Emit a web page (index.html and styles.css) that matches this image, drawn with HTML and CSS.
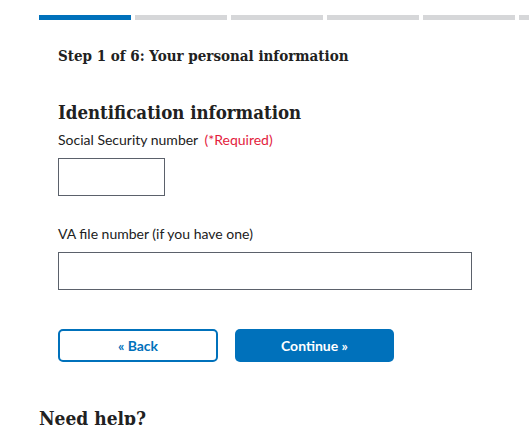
FILE: index.html
```html
<!DOCTYPE html>
<html lang="en">
<head>
<meta charset="utf-8">
<title>Step 1 of 6: Your personal information</title>
<link rel="stylesheet" href="styles.css">
</head>
<body>
<div class="page">
  <div class="progress">
    <span class="seg seg-active"></span>
    <span class="seg"></span>
    <span class="seg"></span>
    <span class="seg"></span>
    <span class="seg"></span>
    <span class="seg"></span>
  </div>
  <div class="form-area">
    <h2 class="step-title">Step 1 of 6: Your personal information</h2>
    <h3 class="section-title">Identification information</h3>
    <div class="field">
      <label class="label" for="ssn">Social Security number <span class="required">(*Required)</span></label>
      <input class="input input-ssn" id="ssn" type="text">
    </div>
    <div class="field field-va">
      <label class="label" for="va">VA file number (if you have one)</label>
      <input class="input input-va" id="va" type="text">
    </div>
    <div class="actions">
      <button class="btn btn-outline" type="button">« Back</button>
      <button class="btn btn-primary" type="button">Continue »</button>
    </div>
  </div>
  <h2 class="help-title">Need help?</h2>
</div>
</body>
</html>
```
FILE: styles.css
```css
html, body {
  margin: 0;
  padding: 0;
  background: #ffffff;
  overflow: hidden;
}
body {
  font-family: "Source Sans Pro", Lato, "Noto Sans", sans-serif;
  color: #212121;
}
.page {
  padding-left: 39px;
  padding-top: 15px;
}
.progress {
  display: flex;
  gap: 4px;
  width: 600px;
}
.seg {
  flex: 0 0 92px;
  height: 5px;
  background: #d6d7d9;
}
.seg-active {
  background: #0071bb;
}
.form-area {
  padding-left: 19px;
}
.step-title {
  font-family: "DejaVu Serif Condensed", "DejaVu Serif", serif;
  font-weight: bold;
  font-size: 15px;
  line-height: 20px;
  margin: 26px 0 0 0;
}
.section-title {
  font-family: "DejaVu Serif Condensed", "DejaVu Serif", serif;
  font-weight: bold;
  font-size: 18.5px;
  line-height: 24px;
  margin: 35px 0 0 0;
}
.field {
  display: flex;
  flex-direction: column;
  align-items: flex-start;
}
.label {
  font-size: 14px;
  line-height: 20px;
  margin-top: 5px;
}
.required {
  color: #e31c3d;
  margin-left: 3px;
}
.input {
  box-sizing: border-box;
  height: 38px;
  border: 1px solid #5b616b;
  border-radius: 0;
  margin: 8px 0 0 0;
  padding: 0 8px;
  font-size: 15px;
  background: #fff;
}
.input-ssn {
  width: 107px;
}
.input-va {
  width: 414px;
}
.field-va {
  margin-top: 23px;
}
.actions {
  display: flex;
  gap: 17px;
  margin-top: 39px;
}
.btn {
  box-sizing: border-box;
  width: 160px;
  height: 33px;
  border-radius: 5px;
  font-family: "Source Sans Pro", Lato, "Noto Sans", sans-serif;
  font-weight: bold;
  font-size: 14px;
  cursor: pointer;
}
.btn-outline {
  background: #fff;
  border: 2px solid #0071bb;
  color: #0071bb;
}
.btn-primary {
  background: #0071bb;
  border: none;
  color: #fff;
  width: 159px;
}
.help-title {
  font-family: "DejaVu Serif Condensed", "DejaVu Serif", serif;
  font-weight: bold;
  font-size: 19px;
  line-height: 24px;
  margin: 44px 0 0 0;
}
```
